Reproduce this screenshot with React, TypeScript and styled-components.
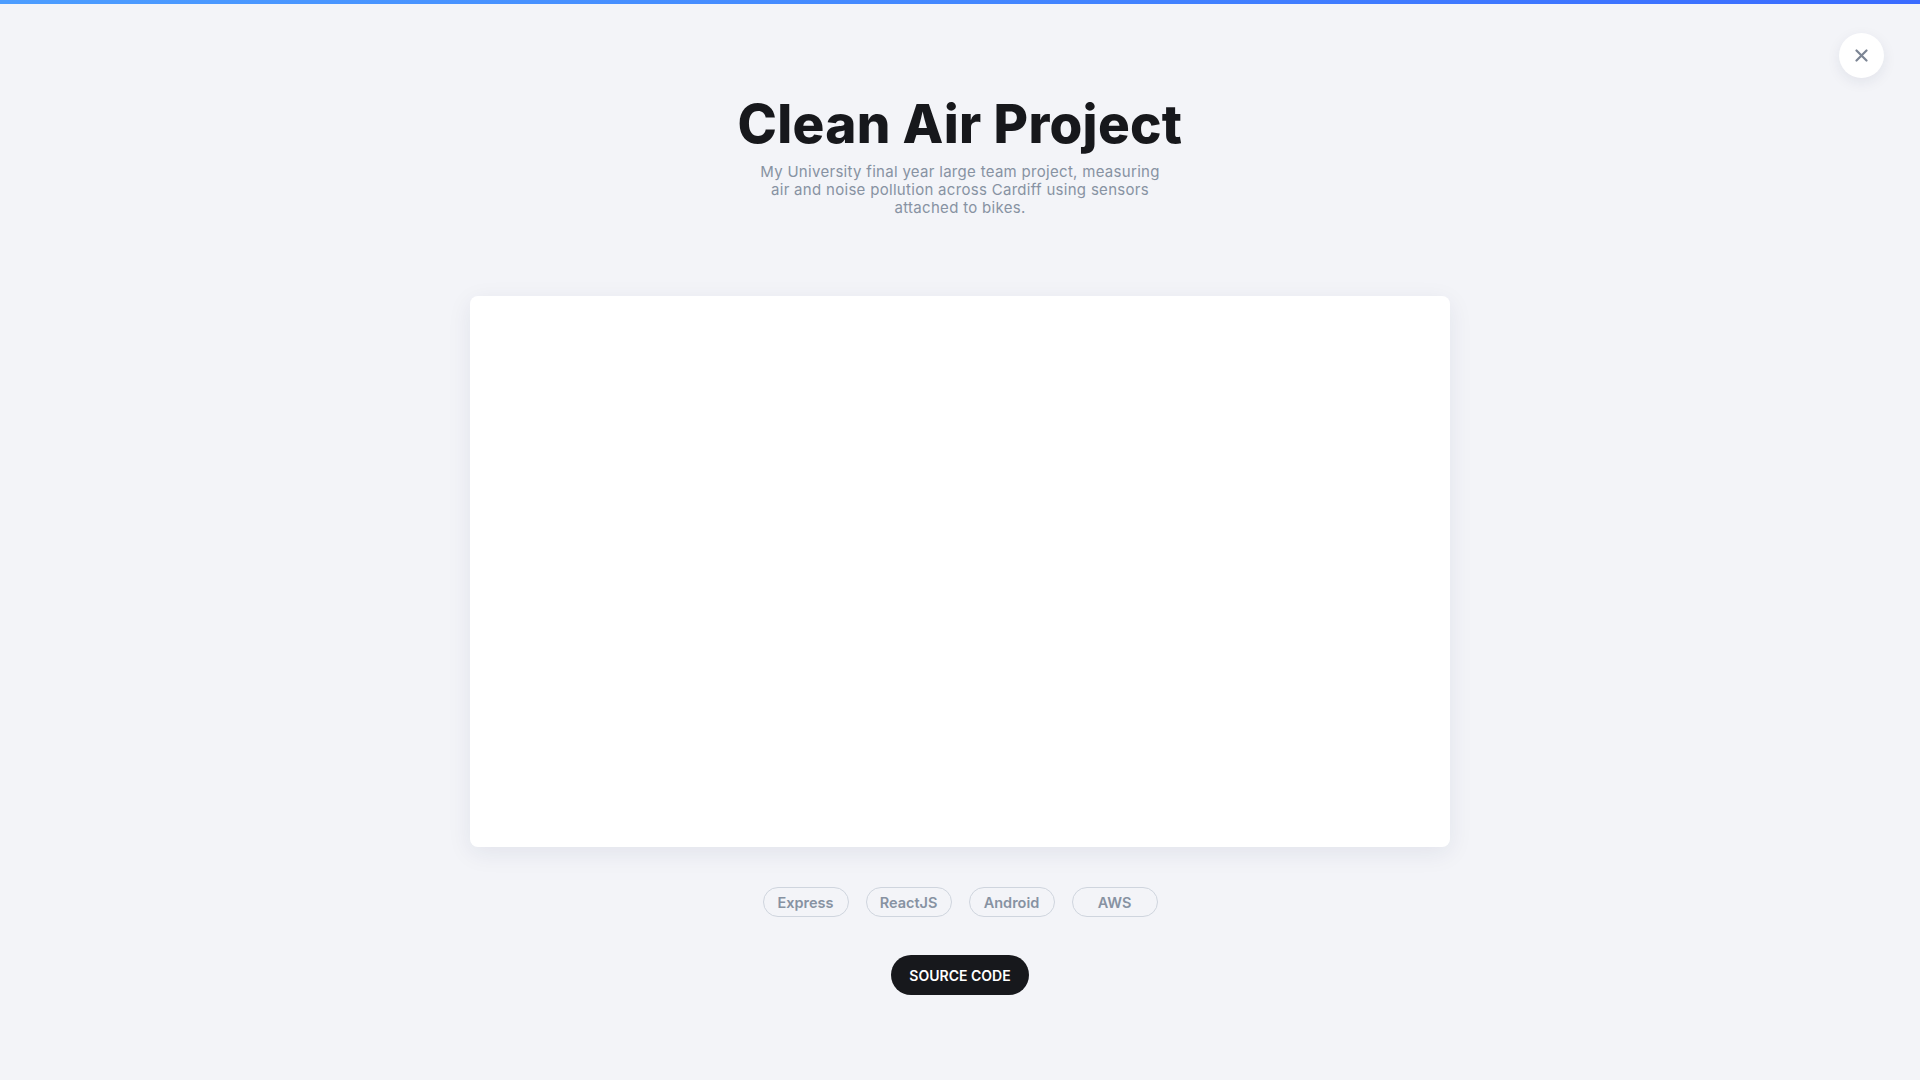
import React from "react";
import styled, { createGlobalStyle } from "styled-components";

const GlobalStyle = createGlobalStyle`
  html, body {
    margin: 0;
    padding: 0;
    background: #f3f4f8;
    font-family: Inter, "Noto Sans", "Liberation Sans", sans-serif;
  }
  * { box-sizing: border-box; }
`;

const Page = styled.div`
  position: relative;
  min-height: 1080px;
  background: #f3f4f8;
`;

const TopBar = styled.div`
  height: 4px;
  background: linear-gradient(90deg, #4c9dff 0%, #4387ff 50%, #3a6bff 100%);
`;

const CloseButton = styled.button`
  position: absolute;
  top: 33px;
  right: 36px;
  width: 45px;
  height: 45px;
  border-radius: 50%;
  border: none;
  background: #ffffff;
  box-shadow: 0 4px 14px rgba(30, 40, 80, 0.08);
  display: flex;
  align-items: center;
  justify-content: center;
  padding: 0;
  cursor: pointer;
`;

const Main = styled.main`
  display: flex;
  flex-direction: column;
  align-items: center;
  padding-top: 89px;
`;

const Title = styled.h1`
  margin: 0;
  font-size: 53px;
  line-height: 62px;
  font-weight: 800;
  color: #17181c;
  letter-spacing: 0.3px;
`;

const Subtitle = styled.p`
  margin: 8px 0 0;
  max-width: 412px;
  text-align: center;
  font-size: 15px;
  line-height: 18px;
  color: #8792a2;
  font-weight: 400;
  letter-spacing: 0.3px;
`;

const Preview = styled.div`
  margin-top: 79px;
  width: 980px;
  height: 551px;
  background: #ffffff;
  border-radius: 8px;
  box-shadow: 0 6px 24px rgba(30, 40, 90, 0.08);
`;

const TagList = styled.div`
  margin-top: 40px;
  display: flex;
  gap: 17px;
`;

const Tag = styled.span`
  width: 86px;
  height: 30px;
  border: 1.5px solid #cfd5de;
  border-radius: 15px;
  display: flex;
  align-items: center;
  justify-content: center;
  font-size: 14.5px;
  font-weight: 600;
  color: #8792a2;
`;

const SourceButton = styled.a`
  margin-top: 38px;
  width: 138px;
  height: 40px;
  border-radius: 20px;
  background: #17181c;
  color: #ffffff;
  font-size: 14px;
  font-weight: 600;
  display: flex;
  align-items: center;
  justify-content: center;
  text-decoration: none;
`;

const tags = ["Express", "ReactJS", "Android", "AWS"];

export default function App() {
  return (
    <Page>
      <GlobalStyle />
      <TopBar />
      <CloseButton aria-label="Close">
        <svg width="13" height="13" viewBox="0 0 13 13">
          <path d="M1.5 1.5 L11.5 11.5 M11.5 1.5 L1.5 11.5" stroke="#7c8594" strokeWidth="2.2" strokeLinecap="round" />
        </svg>
      </CloseButton>
      <Main>
        <Title>Clean Air Project</Title>
        <Subtitle>
          My University final year large team project, measuring air and noise pollution across Cardiff using sensors attached to bikes.
        </Subtitle>
        <Preview />
        <TagList>
          {tags.map((t) => (
            <Tag key={t}>{t}</Tag>
          ))}
        </TagList>
        <SourceButton href="#">SOURCE CODE</SourceButton>
      </Main>
    </Page>
  );
}
